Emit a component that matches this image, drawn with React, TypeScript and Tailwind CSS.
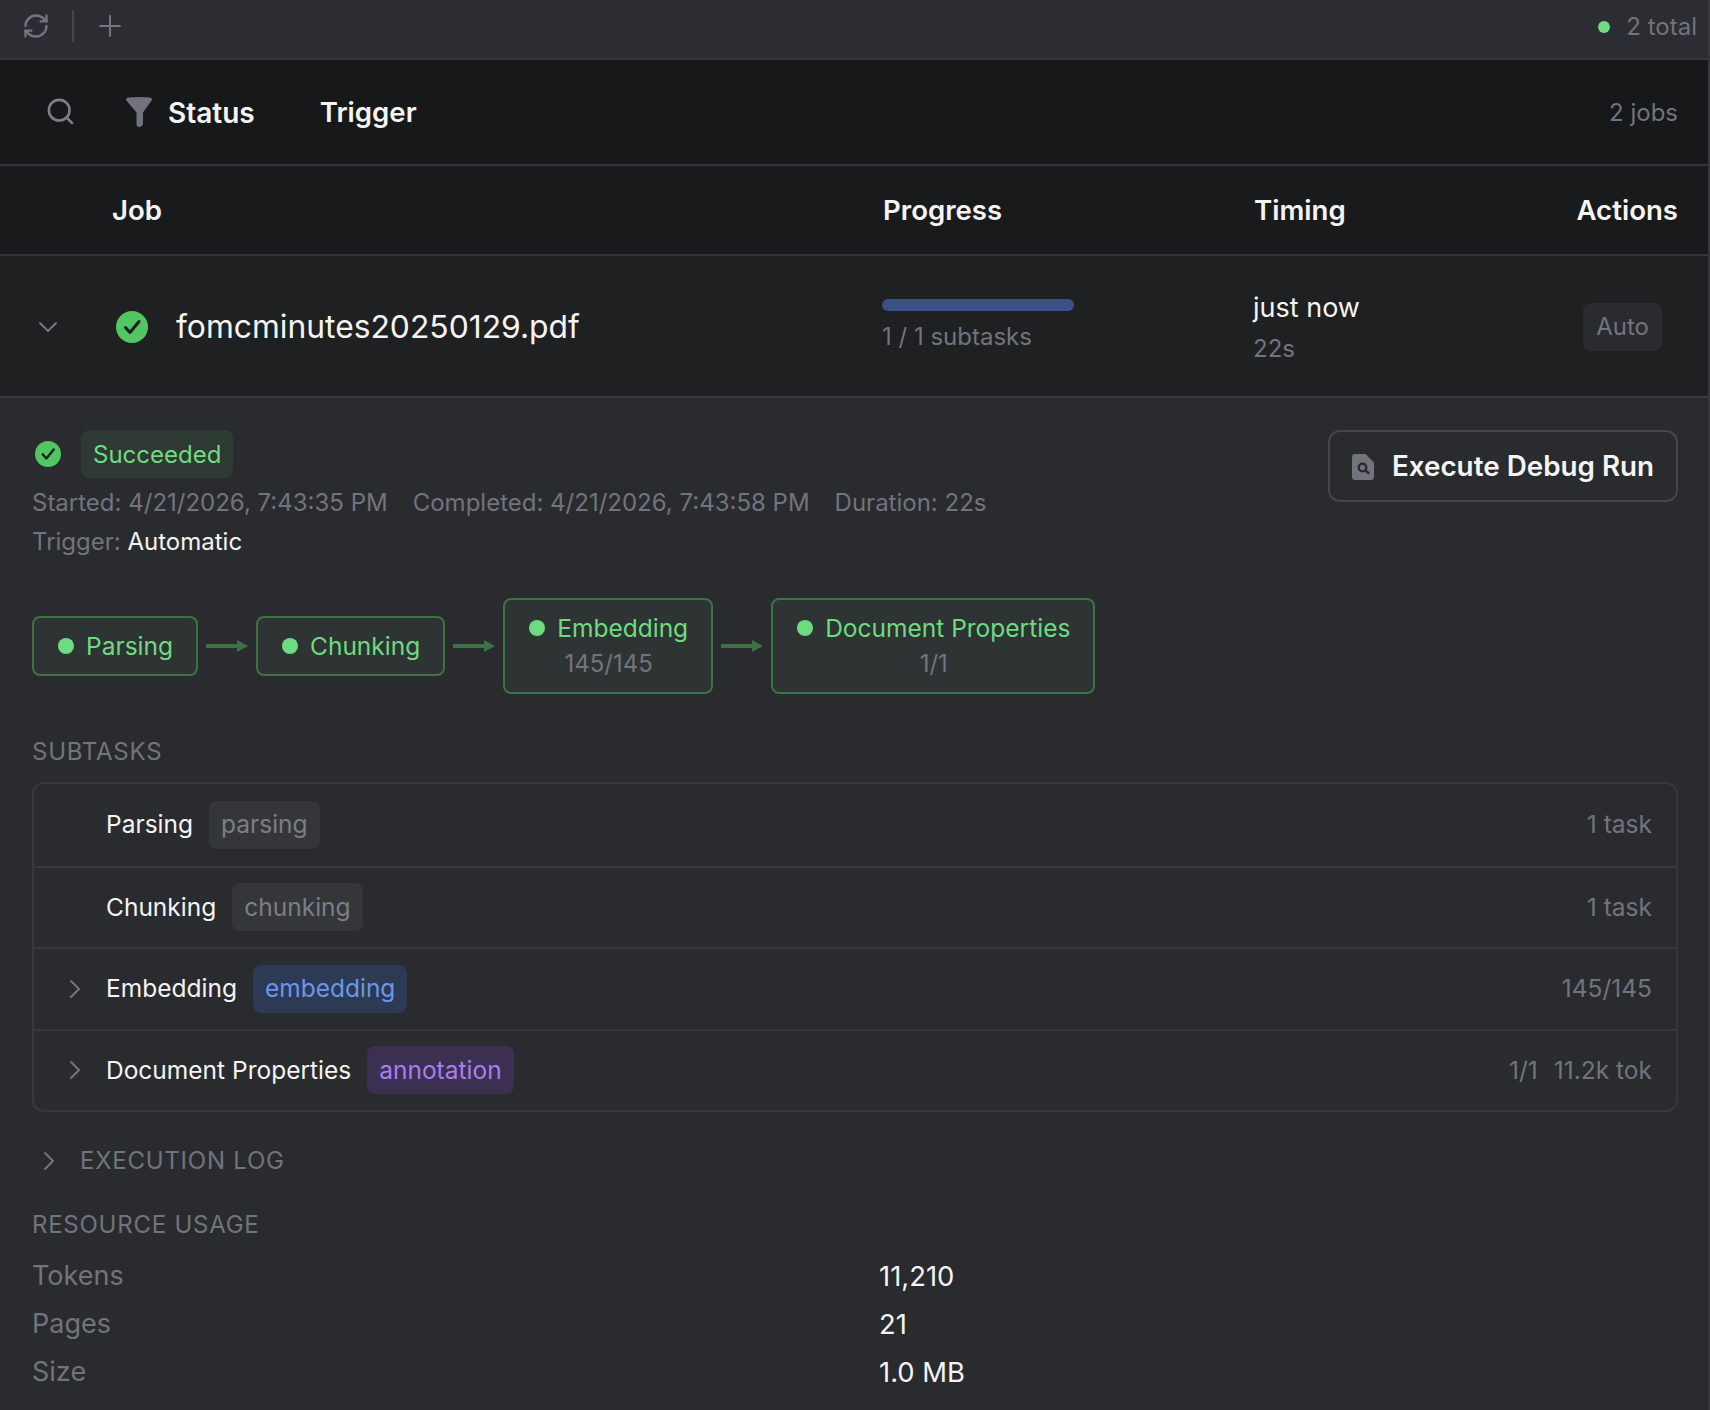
import React from 'react';
import { ChevronDown, ChevronRight, Plus, RefreshCw, Search } from 'lucide-react';

const CheckBadge = ({ size }: { size: number }) => (
  <svg width={size} height={size} viewBox="0 0 32 32" className="shrink-0">
    <circle cx="16" cy="16" r="16" fill="#52c662" />
    <path d="M9.5 16.5l4.5 5 9-11" fill="none" stroke="#1f2022" strokeWidth="3" strokeLinecap="round" strokeLinejoin="round" />
  </svg>
);

const Funnel = () => (
  <svg width="26" height="30" viewBox="0 0 26 30" className="shrink-0">
    <path d="M0 3C0 1.4 1 .8 2.5 .6 9 -.2 17 -.2 23.500 .6 25 .8 26 1.400 26 3L17 15.500V26.500C17 28.500 15 30 13 30 11.500 30 10.500 29 10.500 27.500V15.500Z" fill="#72747d" />
  </svg>
);

const DebugFile = () => (
  <svg width="22" height="26" viewBox="0 0 22 26" className="shrink-0">
    <path d="M3 0h10.500L22 8.500V23a3 3 0 0 1-3 3H3a3 3 0 0 1-3-3V3a3 3 0 0 1 3-3z" fill="#72747d" />
    <circle cx="10.500" cy="13.500" r="3.800" fill="none" stroke="#2a2b2f" strokeWidth="2.400" />
    <path d="M13.500 16.500l3 2.500" stroke="#2a2b2f" strokeWidth="2.400" strokeLinecap="round" />
  </svg>
);

const Arrow = () => (
  <svg width="42" height="12" viewBox="0 0 42 12" className="shrink-0">
    <path d="M0 4h31V0l11 6-11 6V8H0z" fill="#3d7344" />
  </svg>
);

const Stage = ({ name, count }: { name: string; count?: string }) => (
  <div className="flex flex-col items-center rounded-lg border-2 border-[#3d7344] bg-[#2e3433] pb-[11px] pl-[24px] pr-[23px] pt-[11px]">
    <div className="flex items-center gap-[12px]">
      <span className="h-[16px] w-[16px] rounded-full bg-[#6edb80]" />
      <span className="text-[24.5px] leading-[34px] text-[#6edb80]">{name}</span>
    </div>
    {count && <span className="mt-[2px] text-[24px] leading-[34px] text-[#72747d]">{count}</span>}
  </div>
);

const subtasks = [
  { name: 'Parsing', tag: 'parsing', tagCls: 'bg-[#34363a] text-[#7c7e86]', right: ['1 task'], open: false },
  { name: 'Chunking', tag: 'chunking', tagCls: 'bg-[#34363a] text-[#7c7e86]', right: ['1 task'], open: false },
  { name: 'Embedding', tag: 'embedding', tagCls: 'bg-[#2c3a53] text-[#6a97eb]', right: ['145/145'], open: true },
  { name: 'Document Properties', tag: 'annotation', tagCls: 'bg-[#3b2f52] text-[#ab7df0]', right: ['1/1', '11.2k tok'], open: true },
];

const usage = [
  ['Tokens', '11,210'],
  ['Pages', '21'],
  ['Size', '1.0 MB'],
];

export default function App() {
  return (
    <div className="h-[1410px] w-[1710px] overflow-hidden border-r-2 border-[#36383c] bg-[#2a2b2f] font-['Inter',sans-serif] text-[#f4f4f5]">
      <div className="flex h-[60px] items-center justify-between border-b-2 border-[#36383c] bg-[#2c2d32] pl-[22px] pr-[11px]">
        <div className="-mt-[7px] flex items-center">
          <RefreshCw size={28} strokeWidth={2} className="text-[#74767f]" />
          <div className="ml-[22px] mr-[19px] h-[32px] w-[2px] bg-[#45474c]" />
          <Plus size={34} strokeWidth={1.4} className="text-[#74767f]" />
        </div>
        <div className="-mt-[4px] flex items-center gap-[16px]">
          <span className="h-[12px] w-[12px] rounded-full bg-[#6edb80]" />
          <span className="text-[24px] text-[#72747d]">2 total</span>
        </div>
      </div>

      <div className="flex h-[106px] items-center justify-between border-b-2 border-[#323438] bg-[#17181a] pl-[45px] pr-[30px]">
        <div className="flex items-center">
          <Search size={31} strokeWidth={2} className="-mt-[1px] text-[#7d7f87]" />
          <div className="ml-[50px]"><Funnel /></div>
          <span className="ml-[16px] mt-[1px] text-[28px] font-semibold">Status</span>
          <span className="ml-[65px] mt-[1px] text-[27.6px] font-semibold">Trigger</span>
        </div>
        <span className="mt-[1px] text-[24px] text-[#72747d]">2 jobs</span>
      </div>

      <div className="flex h-[90px] items-center border-b-2 border-[#323438] bg-[#191a1c] pl-[112px] pr-[30px] pt-[2px] text-[27.6px] font-semibold">
        <span className="w-[771px]">Job</span>
        <span className="w-[371px]">Progress</span>
        <span>Timing</span>
        <span className="ml-auto">Actions</span>
      </div>

      <div className="flex h-[142px] items-center border-b-2 border-[#3a3c40] bg-[#1f2022] pl-[32px] pr-[46px] pt-[2px]">
        <ChevronDown size={32} strokeWidth={1.5} className="text-[#74767f]" />
        <div className="ml-[52px]"><CheckBadge size={32} /></div>
        <span className="ml-[28px] w-[706px] text-[31.8px]">fomcminutes20250129.pdf</span>
        <div className="w-[371px]">
          <div className="h-[12px] w-[192px] rounded-full bg-[#3b5087]" />
          <div className="mt-[8px] text-[24px] text-[#72747d]">1 / 1 subtasks</div>
        </div>
        <div>
          <div className="text-[27px] leading-[44px]">just now</div>
          <div className="text-[24px] leading-[38px] text-[#72747d]">22s</div>
        </div>
        <span className="ml-auto flex h-[48px] items-center rounded-lg bg-[#2a2b2f] px-[13px] text-[24px] text-[#72747d]">Auto</span>
      </div>

      <div className="pl-[32px] pr-[30px] pt-[32px]">
        <div className="flex items-start justify-between">
          <div>
            <div className="flex items-center gap-[20px]">
              <div className="ml-[3px]"><CheckBadge size={26} /></div>
              <span className="flex h-[48px] items-center rounded-lg bg-[#2e3a33] px-[12px] pt-[2px] text-[24px] text-[#6edb80]">Succeeded</span>
            </div>
            <div className="mt-[6px] flex gap-[25px] text-[24px] leading-[38px] text-[#72747d]">
              <span>Started: 4/21/2026, 7:43:35 PM</span>
              <span>Completed: 4/21/2026, 7:43:58 PM</span>
              <span>Duration: 22s</span>
            </div>
            <div className="mt-[1px] text-[24px] leading-[38px] text-[#72747d]">
              Trigger: <span className="text-[#f4f4f5]">Automatic</span>
            </div>
          </div>
          <button className="flex h-[72px] w-[350px] items-center justify-center gap-[18px] rounded-xl border-2 border-[#45474c] pt-[2px] text-[27.8px] font-semibold">
            <DebugFile />
            Execute Debug Run
          </button>
        </div>

        <div className="mt-[37px] flex items-center gap-[8px]">
          <Stage name="Parsing" />
          <Arrow />
          <Stage name="Chunking" />
          <Arrow />
          <Stage name="Embedding" count="145/145" />
          <Arrow />
          <Stage name="Document Properties" count="1/1" />
        </div>

        <div className="mt-[40px] text-[24px] tracking-[0.75px] text-[#72747d]">SUBTASKS</div>
        <div className="mt-[12px] overflow-hidden rounded-xl border-2 border-[#36383c]">
          {subtasks.map((s, i) => (
            <div key={s.name} className={`flex h-[81.5px] items-center pr-[24px] ${i > 0 ? 'border-t-2 border-[#36383c]' : ''}`}>
              <div className="flex w-[72px] pl-[25px]">
                {s.open && <ChevronRight size={32} strokeWidth={1.5} className="text-[#74767f]" />}
              </div>
              <span className="text-[24.5px]">{s.name}</span>
              <span className={`ml-[16px] flex h-[48px] items-center rounded-lg px-[12px] text-[24.5px] ${s.tagCls}`}>{s.tag}</span>
              <span className="ml-auto flex gap-[16px] text-[24.5px] text-[#72747d]">
                {s.right.map((r) => <span key={r}>{r}</span>)}
              </span>
            </div>
          ))}
        </div>

        <div className="mt-[31px] flex items-center">
          <ChevronRight size={32} strokeWidth={1.5} className="ml-[1px] text-[#74767f]" />
          <span className="ml-[15px] text-[24px] tracking-[0.75px] text-[#72747d]">EXECUTION LOG</span>
        </div>

        <div className="mt-[28px] text-[24px] tracking-[0.75px] text-[#72747d]">RESOURCE USAGE</div>
        <div className="mt-[9px] grid grid-cols-[847px_1fr] leading-[48px]">
          {usage.map(([k, v]) => (
            <React.Fragment key={k}>
              <span className="text-[27px] text-[#72747d]">{k}</span>
              <span className="text-[27.4px]">{v}</span>
            </React.Fragment>
          ))}
        </div>
      </div>
    </div>
  );
}
